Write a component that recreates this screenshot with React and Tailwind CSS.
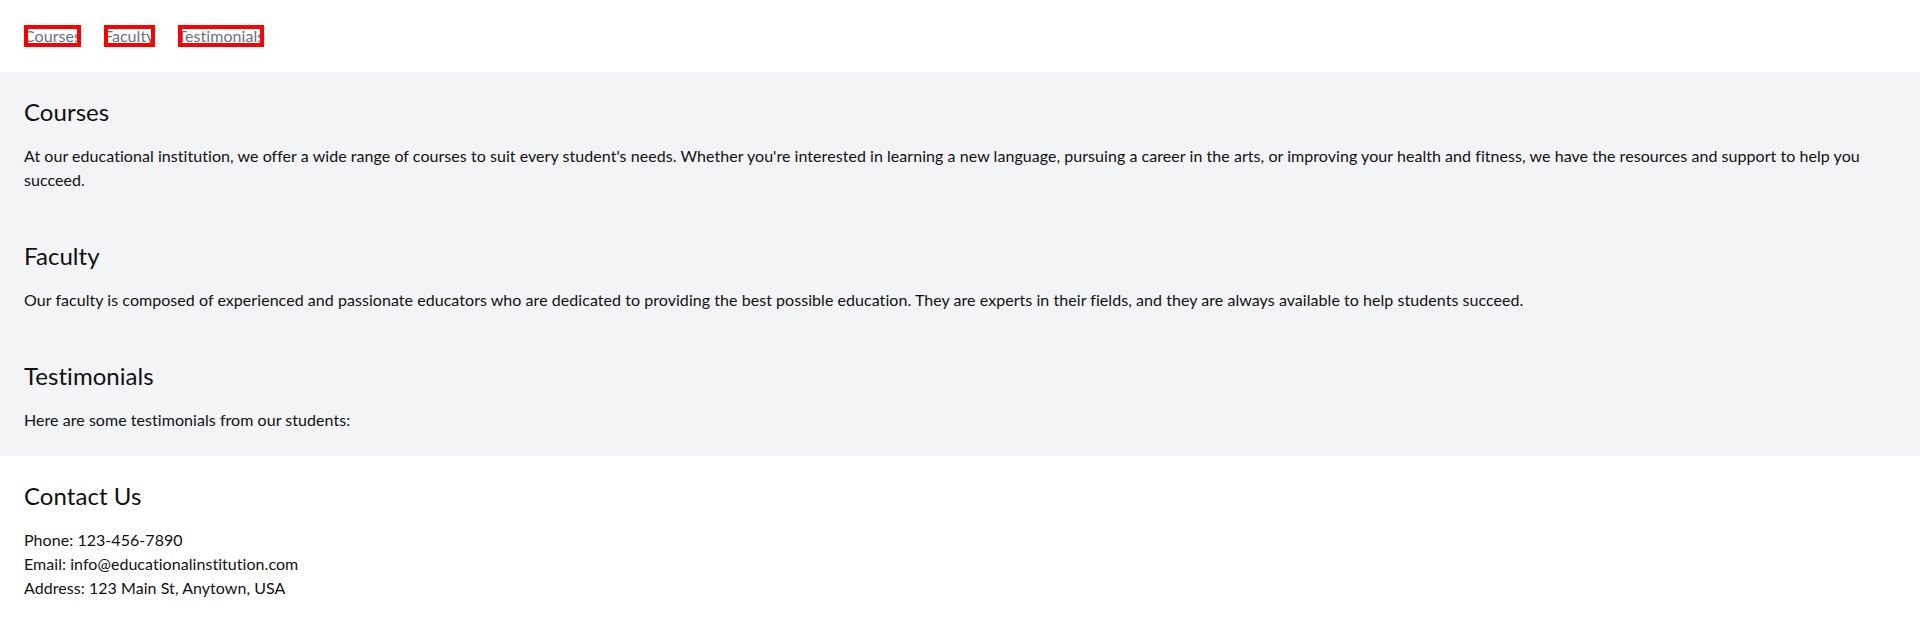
const navLinks = ["Courses", "Faculty", "Testimonials"];

const sections = [
  {
    title: "Courses",
    body: "At our educational institution, we offer a wide range of courses to suit every student's needs. Whether you're interested in learning a new language, pursuing a career in the arts, or improving your health and fitness, we have the resources and support to help you succeed.",
  },
  {
    title: "Faculty",
    body: "Our faculty is composed of experienced and passionate educators who are dedicated to providing the best possible education. They are experts in their fields, and they are always available to help students succeed.",
  },
  {
    title: "Testimonials",
    body: "Here are some testimonials from our students:",
  },
];

export default function App() {
  return (
    <div className="min-h-screen bg-white text-black font-['Lato',sans-serif] tracking-[0.05px]">
      {/* Nav */}
      <nav className="px-6 py-[25px]">
        <ul className="flex gap-[23px]">
          {navLinks.map((name) => (
            <li key={name}>
              <a href="#" className="block leading-[22px] text-gray-500 outline-4 outline-[#ff0000] -outline-offset-4">
                {name}
              </a>
            </li>
          ))}
        </ul>
      </nav>

      {/* Sections */}
      <main className="bg-gray-100">
        {sections.map((s) => (
          <section key={s.title} className="px-6 py-6">
            <h2 className="text-2xl mb-4 text-[#111]">{s.title}</h2>
            <p className="text-base leading-6 text-[#111]">{s.body}</p>
          </section>
        ))}
      </main>

      {/* Contact */}
      <footer className="px-6 py-6">
        <h2 className="text-2xl mb-4 text-[#111]">Contact Us</h2>
        <p className="leading-6 text-[#111]">Phone: 123-456-7890</p>
        <p className="leading-6 text-[#111]">Email: info@educationalinstitution.com</p>
        <p className="leading-6 text-[#111]">Address: 123 Main St, Anytown, USA</p>
      </footer>
    </div>
  );
}
